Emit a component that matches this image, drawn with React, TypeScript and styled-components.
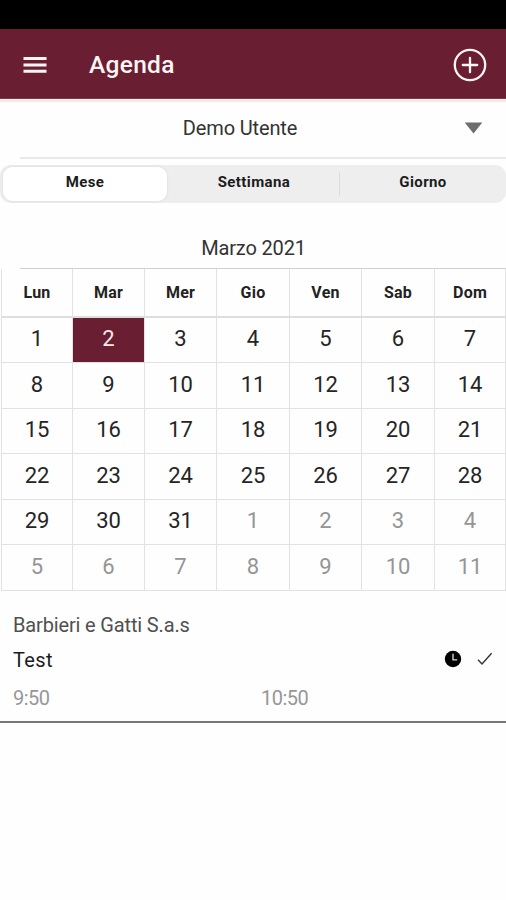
import React from "react";
import styled, { createGlobalStyle } from "styled-components";

const Global = createGlobalStyle`
  *, *::before, *::after { box-sizing: border-box; }
  body { margin: 0; background: #fff; font-family: Roboto, "Liberation Sans", sans-serif; color: #222; }
  button { font: inherit; color: inherit; border: 0; padding: 0; background: none; }
`;

const Screen = styled.div`
  width: 506px;
  height: 900px;
  display: flex;
  flex-direction: column;
  overflow: hidden;
  background: #fefefe;
`;

const StatusBar = styled.div`
  height: 29px;
  flex: none;
  background: #000;
`;

const Header = styled.header`
  height: 70px;
  flex: none;
  display: flex;
  align-items: center;
  padding: 2px 19px 0 23px;
  background: #6a1e32;
  border-bottom: 1px solid #7c3a4a;
  box-shadow: 0 3px 1px #f1ece8;
  color: #fff5f5;
`;

const IconButton = styled.button`
  display: flex;
`;

const Title = styled.h1`
  flex: 1;
  margin: 1px 0 0 42px;
  font-size: 24.5px;
  font-weight: 500;
  line-height: 30px;
  letter-spacing: 0.3px;
`;

const UserSelect = styled.div`
  height: 60px;
  flex: none;
  display: grid;
  grid-template-columns: 1fr 19px;
  align-items: center;
  margin-left: 20px;
  padding: 0 23px 0 0;
  border-bottom: 2px solid #e9e9e9;
`;

const UserName = styled.span`
  text-align: center;
  font-size: 20px;
  line-height: 24px;
  letter-spacing: -0.15px;
  padding-right: 4px;
  color: #333;
`;

const Tabs = styled.div`
  height: 38px;
  flex: none;
  display: grid;
  grid-template-columns: 168px 172px 166px;
  margin-top: 6px;
  border-radius: 11px;
  background: #eee;
`;

const Tab = styled.button<{ $active?: boolean; $divided?: boolean }>`
  position: relative;
  display: flex;
  align-items: center;
  justify-content: center;
  margin: ${(p) => (p.$active ? "2px 1px 2px 3px" : "0")};
  padding-bottom: 4px;
  border-radius: 9px;
  background: ${(p) => (p.$active ? "#fff" : "transparent")};
  box-shadow: ${(p) => (p.$active ? "0 0 2px 1px #e2e2e2" : "none")};
  font-size: 15px;
  font-weight: 700;
  letter-spacing: 0.4px;
  color: #1c1c1c;
  &::after {
    content: ${(p) => (p.$divided ? '""' : "none")};
    position: absolute;
    right: 0;
    top: 7px;
    width: 1px;
    height: 24px;
    background: #dcdcdc;
  }
`;

const Month = styled.h2`
  height: 66px;
  flex: none;
  display: flex;
  align-items: flex-end;
  justify-content: center;
  margin: 0 0 0 20px;
  padding: 0 19px 8px 0;
  border-bottom: 1px solid #d0d0d0;
  font-size: 20px;
  font-weight: 400;
  line-height: 24px;
  letter-spacing: -0.15px;
  color: #333;
`;

const Calendar = styled.div`
  flex: none;
  display: grid;
  grid-template-columns: 71px 72px 72px 73px 72px 73px 71px;
  grid-template-rows: 49px 45px 46px 45px 46px 45px 46px;
  margin-left: 1px;
  border-left: 1px solid #e2e2e2;
`;

const Weekday = styled.div`
  display: flex;
  align-items: center;
  justify-content: center;
  border-right: 1px solid #e2e2e2;
  border-bottom: 2px solid #dedede;
  font-size: 16px;
  font-weight: 700;
  letter-spacing: 0.2px;
  color: #222;
`;

const Day = styled.div<{ $muted?: boolean; $selected?: boolean }>`
  display: flex;
  align-items: center;
  justify-content: center;
  padding-bottom: 3px;
  border-right: 1px solid #e2e2e2;
  border-bottom: 1px solid #e2e2e2;
  background: ${(p) => (p.$selected ? "#6a1e32" : "transparent")};
  background-clip: padding-box;
  font-size: 22px;
  color: ${(p) => (p.$selected ? "#fbe9ec" : p.$muted ? "#959595" : "#252525")};
`;

const Event = styled.article`
  height: 132px;
  flex: none;
  padding: 22px 13px 0 13px;
  border-bottom: 2px solid #777;
`;

const Company = styled.div`
  font-size: 20px;
  line-height: 24px;
  letter-spacing: -0.15px;
  color: #505050;
`;

const EventRow = styled.div`
  display: flex;
  align-items: center;
  height: 24px;
  margin-top: 11px;
`;

const EventName = styled.span`
  flex: 1;
  font-size: 20px;
  line-height: 24px;
  letter-spacing: 0.4px;
  color: #1c1c1c;
`;

const EventIcons = styled.span`
  display: flex;
  align-items: center;
  gap: 15px;
  padding-bottom: 2px;
`;

const Times = styled.div`
  display: grid;
  grid-template-columns: 248px 1fr;
  margin-top: 14px;
  font-size: 20px;
  line-height: 24px;
  letter-spacing: -0.5px;
  color: #979797;
`;

const weekdays = ["Lun", "Mar", "Mer", "Gio", "Ven", "Sab", "Dom"];
const days = Array.from({ length: 42 }, (_, i) => ({
  label: i < 31 ? i + 1 : i - 30,
  muted: i >= 31,
}));

export default function App() {
  return (
    <>
      <Global />
      <Screen>
        <StatusBar />
        <Header>
          <IconButton aria-label="Menu">
            <svg width="24" height="18" viewBox="0 0 24 18" fill="currentColor">
              <path d="M.5 1h23v3H.5zM.5 7.4h23v3H.5zM.5 13.8h23v3H.5z" />
            </svg>
          </IconButton>
          <Title>Agenda</Title>
          <IconButton aria-label="Aggiungi">
            <svg width="34" height="34" viewBox="0 0 34 34" fill="none" stroke="currentColor" strokeWidth="2.3">
              <circle cx="17" cy="17" r="15.2" />
              <path d="M17 9.8v14.4M9.8 17h14.4" strokeLinecap="round" />
            </svg>
          </IconButton>
        </Header>
        <UserSelect>
          <UserName>Demo Utente</UserName>
          <svg width="19" height="12" viewBox="0 0 19 12">
            <path d="M.7.6h17.6L9.5 11.6z" fill="#6d6d6d" />
          </svg>
        </UserSelect>
        <Tabs>
          <Tab $active>Mese</Tab>
          <Tab $divided>Settimana</Tab>
          <Tab>Giorno</Tab>
        </Tabs>
        <Month>Marzo 2021</Month>
        <Calendar>
          {weekdays.map((d) => (
            <Weekday key={d}>{d}</Weekday>
          ))}
          {days.map((d, i) => (
            <Day key={i} $muted={d.muted} $selected={i === 1}>
              {d.label}
            </Day>
          ))}
        </Calendar>
        <Event>
          <Company>Barbieri e Gatti S.a.s</Company>
          <EventRow>
            <EventName>Test</EventName>
            <EventIcons>
              <svg width="18" height="18" viewBox="0 0 18 18">
                <circle cx="9" cy="9" r="8.2" fill="#000" />
                <path d="M9 3.8v6.1h4.2" fill="none" stroke="#ddd" strokeWidth="1.3" />
              </svg>
              <svg width="16" height="16" viewBox="0 0 16 16" fill="none" stroke="#333" strokeWidth="1.4">
                <path d="M1 8.8l4 4.2L14.6 2.2" />
              </svg>
            </EventIcons>
          </EventRow>
          <Times>
            <span>9:50</span>
            <span>10:50</span>
          </Times>
        </Event>
      </Screen>
    </>
  );
}
